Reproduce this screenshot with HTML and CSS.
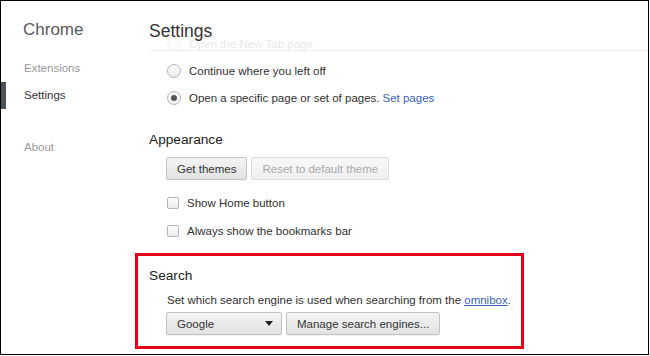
FILE: index.html
```html
<!DOCTYPE html>
<html lang="en">
<head>
  <meta charset="UTF-8" />
  <title>Settings</title>
  <link rel="stylesheet" href="styles.css">
</head>
<body>
  <div class="frame">
    <div class="sidebar">
      <div class="brand">Chrome</div>
      <ul class="nav">
        <li>Extensions</li>
        <li class="selected">Settings</li>
        <li class="nav-gap">About</li>
      </ul>
    </div>

    <div class="main">
      <div class="page-header">
        <h1>Settings</h1>
      </div>

      <div class="startup">
        <label class="row faded"><span class="radio"></span>Open the New Tab page</label>
        <label class="row"><span class="radio"></span>Continue where you left off</label>
        <label class="row"><span class="radio checked"></span>Open a specific page or set of pages. <a class="link">Set pages</a></label>
      </div>

      <h2>Appearance</h2>
      <div class="buttons">
        <button class="btn">Get themes</button>
        <button class="btn" disabled>Reset to default theme</button>
      </div>
      <label class="row check"><span class="checkbox"></span>Show Home button</label>
      <label class="row check"><span class="checkbox"></span>Always show the bookmarks bar</label>

      <!-- zone surlignée -->
      <div class="search-box">
        <h2>Search</h2>
        <p class="desc">Set which search engine is used when searching from the <a class="link underline">omnibox</a>.</p>
        <div class="buttons">
          <div class="select">Google<span class="caret"></span></div>
          <button class="btn">Manage search engines...</button>
        </div>
      </div>
    </div>
  </div>
</body>
</html>
```

FILE: styles.css
```css
/* Reset */
* {
  margin: 0;
  padding: 0;
  box-sizing: border-box;
}

body {
  font-family: 'Liberation Sans', Arial, sans-serif;
  background: #fff;
  color: #303030;
  font-size: 11.5px;
}

/* Cadre de la capture */
.frame {
  width: 649px;
  height: 355px;
  border: 1px solid #000;
  display: flex;
  overflow: hidden;
  background: #fff;
}

/* Barre latérale */
.sidebar {
  width: 147px;
  flex-shrink: 0;
}

.brand {
  font-size: 17px;
  line-height: 20px;
  color: #5a5a5a;
  padding: 19px 0 0 22px;
  height: 54px;
}

.nav {
  list-style: none;
}

.nav li {
  height: 27px;
  line-height: 27px;
  color: #999;
  font-size: 11.5px;
  border-left: 6px solid transparent;
  margin-left: -1px;
  padding-left: 18px;
}

.nav li.selected {
  color: #333;
  border-left-color: #4b5158;
}

.nav li.nav-gap {
  margin-top: 25px;
}

/* Contenu principal */
.main {
  flex: 1;
  padding-left: 1px;
}

.page-header {
  position: relative;
  z-index: 2;
  height: 50px;
  margin-bottom: -21px;
  background: rgba(255, 255, 255, 0.6);
  border-bottom: 1px solid #eee;
  padding-top: 20px;
}

h1 {
  font-size: 17.5px;
  font-weight: normal;
  line-height: 20px;
  color: #333;
}

h2 {
  font-size: 13.7px;
  font-weight: normal;
  line-height: 20px;
  color: #222;
}

.startup {
  margin-bottom: 19px;
}

.row {
  display: flex;
  align-items: center;
  height: 27px;
  padding-left: 18px;
  color: #303030;
}

.row.check {
  height: 28px;
}

.row.faded {
  color: #c4c4c4;
}

.link {
  color: #3b5fbf;
  margin-left: 3px;
}

.link.underline {
  text-decoration: underline;
  margin-left: 0;
}

/* Boutons radio */
.radio {
  width: 14px;
  height: 14px;
  border: 1px solid #b5b5b5;
  border-radius: 50%;
  background: linear-gradient(#fdfdfd, #ececec);
  margin-right: 8px;
  position: relative;
  flex-shrink: 0;
}

.radio.checked::after {
  content: '';
  position: absolute;
  width: 6px;
  height: 6px;
  border-radius: 50%;
  background: #555;
  top: 3px;
  left: 3px;
}

.faded .radio {
  border-color: #ddd;
  background: #fafafa;
}

/* Cases à cocher */
.checkbox {
  width: 12px;
  height: 12px;
  border: 1px solid #b5b5b5;
  border-radius: 2px;
  background: linear-gradient(#fdfdfd, #ececec);
  margin-right: 8px;
  flex-shrink: 0;
}

.buttons {
  display: flex;
  gap: 4px;
  padding-left: 17px;
  margin-top: 7px;
  margin-bottom: 9px;
}

.btn,
.select {
  font-family: inherit;
  font-size: 11.5px;
  height: 23px;
  padding: 0 10px;
  border: 1px solid #c3c3c3;
  border-radius: 2px;
  background: linear-gradient(#f4f4f4, #e2e2e2);
  color: #333;
  box-shadow: 0 1px 0 rgba(0, 0, 0, 0.05);
}

.btn:disabled {
  color: #aaa;
  border-color: #dcdcdc;
  background: linear-gradient(#f8f8f8, #efefef);
  box-shadow: none;
}

.select {
  width: 116px;
  display: flex;
  align-items: center;
  justify-content: space-between;
}

.caret {
  width: 0;
  height: 0;
  border-left: 4px solid transparent;
  border-right: 4px solid transparent;
  border-top: 5px solid #222;
  margin-right: -2px;
}

/* Encadré rouge */
.search-box {
  width: 389px;
  margin-left: -14px;
  margin-top: 8px;
  border: 3px solid #e4001b;
  padding: 10px 0 11px 11px;
}

.search-box .buttons {
  margin: 4px 0 0 0;
}

.desc {
  padding-left: 18px;
  margin-top: 6px;
  line-height: 16px;
  white-space: nowrap;
}
```
